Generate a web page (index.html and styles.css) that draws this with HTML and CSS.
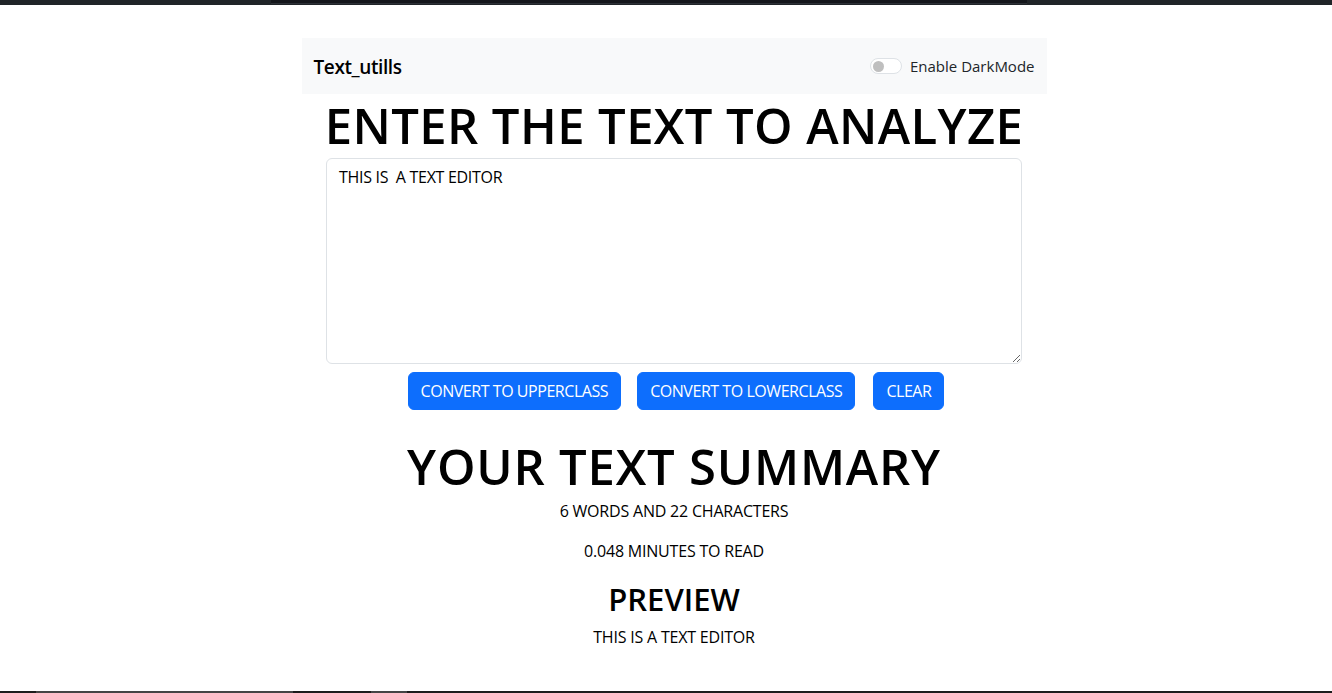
FILE: index.html
```html
<!DOCTYPE html>
<html lang="en">
<head>
<meta charset="utf-8">
<title>Text_utills</title>
<link rel="stylesheet" href="styles.css">
</head>
<body>
<div class="topbar"><div class="topbar-inner"></div></div>
<div class="page">
  <nav class="navbar">
    <span class="brand">Text_utills</span>
    <label class="switch">
      <span class="toggle"><span class="knob"></span></span>
      <span class="switch-label">Enable DarkMode</span>
    </label>
  </nav>
  <main class="main">
    <h1 class="title">ENTER THE TEXT TO ANALYZE</h1>
    <textarea class="editor" rows="8">THIS IS  A TEXT EDITOR</textarea>
    <div class="actions">
      <button class="btn">CONVERT TO UPPERCLASS</button>
      <button class="btn">CONVERT TO LOWERCLASS</button>
      <button class="btn">CLEAR</button>
    </div>
    <h1 class="title summary">YOUR TEXT SUMMARY</h1>
    <p class="line">6 WORDS AND 22 CHARACTERS</p>
    <p class="line">0.048 MINUTES TO READ</p>
    <h2 class="preview">PREVIEW</h2>
    <p class="line last">THIS IS A TEXT EDITOR</p>
  </main>
</div>
<div class="bottombar">
  <span class="seg s1"></span>
  <span class="seg s2"></span>
  <span class="seg s3"></span>
</div>
</body>
</html>
```
FILE: styles.css
```css
* { box-sizing: border-box; }
html, body { margin: 0; padding: 0; }
body {
  font-family: "Open Sans", "Noto Sans", sans-serif;
  color: #000;
  background: #fff;
  height: 693px;
  overflow: hidden;
  position: relative;
}
.topbar {
  height: 5px;
  background: #202428;
  padding-left: 271px;
}
.topbar-inner {
  width: 756px;
  height: 4px;
  background: #14161b;
  border-bottom: 1px solid #2c3036;
}
.page {
  display: flex;
  flex-direction: column;
  align-items: center;
  padding-top: 33px;
  padding-left: 16px;
}
.navbar {
  width: 745px;
  height: 56px;
  background: #f8f9fa;
  display: flex;
  align-items: center;
  justify-content: space-between;
  padding: 0 12px;
}
.brand {
  font-size: 19px;
  font-weight: 600;
  color: #000;
  letter-spacing: -0.4px;
  padding-top: 2px;
}
.switch {
  display: flex;
  align-items: center;
  gap: 8px;
  font-size: 15px;
  color: #212529;
}
.toggle {
  width: 32px;
  height: 16px;
  border: 1px solid #dee2e6;
  border-radius: 8px;
  background: #fff;
  display: flex;
  align-items: center;
  padding-left: 2px;
}
.knob {
  width: 11px;
  height: 11px;
  border-radius: 50%;
  background: #bfbfbf;
}
.main {
  width: 696px;
  display: flex;
  flex-direction: column;
  align-items: center;
}
.title {
  margin: 0;
  font-size: 49px;
  font-weight: 600;
  line-height: 62px;
  letter-spacing: 0.4px;
  white-space: nowrap;
}
.editor {
  width: 696px;
  height: 206px;
  border: 1px solid #dee2e6;
  border-radius: 6px;
  padding: 6px 12px;
  font-family: inherit;
  font-size: 16px;
  line-height: 24px;
  letter-spacing: -0.3px;
  color: #000;
  resize: vertical;
  display: block;
  margin-top: 2px;
}
.actions {
  display: flex;
  gap: 16px;
  margin-top: 8px;
  padding-left: 4px;
}
.actions .btn:last-child { margin-left: 2px; }
.btn {
  height: 38px;
  background: #0d6efd;
  border: 1px solid #0d6efd;
  color: #fff;
  border-radius: 6px;
  padding: 0 12px;
  font-family: inherit;
  font-size: 16px;
  letter-spacing: -0.45px;
}
.summary {
  margin-top: 30px;
  line-height: 52px;
  letter-spacing: 0.8px;
}
.line {
  margin: 7px 0 0;
  font-size: 16px;
  line-height: 24px;
  color: #000;
  letter-spacing: -0.2px;
}
.line + .line { margin-top: 16px; }
.preview {
  margin: 16px 0 0;
  font-size: 31px;
  font-weight: 600;
  line-height: 40px;
  letter-spacing: 0;
}
.line.last { margin-top: 6px; }
.bottombar {
  position: absolute;
  left: 0;
  bottom: 0;
  width: 100%;
  height: 2px;
  background: #1c1c1c;
  display: flex;
}
.seg { height: 2px; display: block; }
.s1 { margin-left: 36px; width: 257px; background: #454545; }
.s2 { width: 78px; }
.s3 { width: 36px; background: #454545; }
```
